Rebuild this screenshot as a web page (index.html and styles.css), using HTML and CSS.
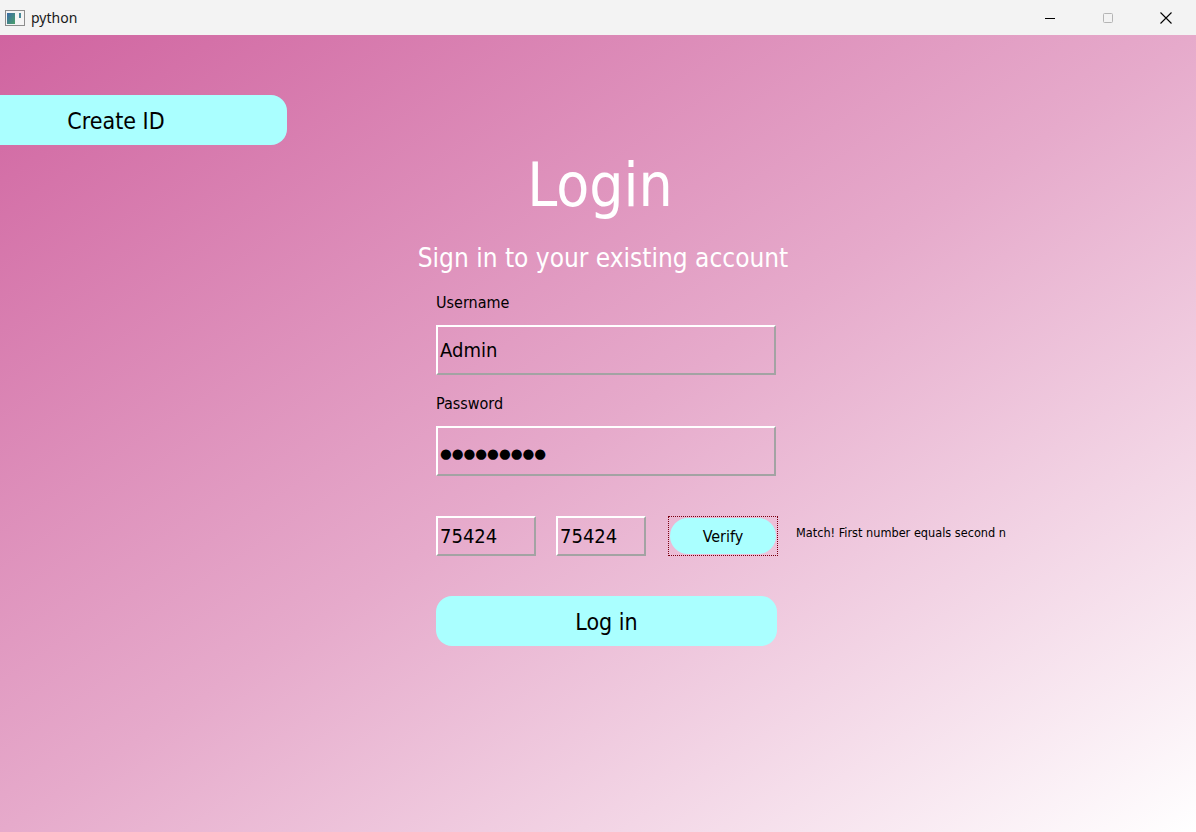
FILE: index.html
```html
<!DOCTYPE html>
<html>
<head>
<meta charset="utf-8">
<link rel="stylesheet" href="styles.css">
</head>
<body>
<div class="window">
  <div class="titlebar">
    <div class="app">
      <svg class="app-icon" width="20" height="16" viewBox="0 0 20 16">
        <rect x="0.5" y="0.5" width="19" height="15" fill="#f4f4f4" stroke="#8c8c8c"/>
        <defs><linearGradient id="g" x1="0" y1="0" x2="1" y2="1"><stop offset="0" stop-color="#3b6aa6"/><stop offset="1" stop-color="#4aa06a"/></linearGradient></defs>
        <rect x="2" y="3" width="8" height="11" fill="url(#g)"/>
        <rect x="14" y="3" width="2" height="5" fill="#4a8a9a"/>
      </svg>
      <span class="app-title">python</span>
    </div>
    <div class="controls">
      <svg class="ctl" width="12" height="12" viewBox="0 0 12 12"><line x1="1" y1="6.5" x2="11" y2="6.5" stroke="#000" stroke-width="1"/></svg>
      <svg class="ctl" width="12" height="12" viewBox="0 0 12 12"><rect x="1.5" y="1.5" width="9" height="9" rx="1" fill="none" stroke="#b5b5b5" stroke-width="1"/></svg>
      <svg class="ctl" width="12" height="12" viewBox="0 0 12 12"><path d="M0.5 0.5 L11.5 11.5 M11.5 0.5 L0.5 11.5" stroke="#000" stroke-width="1.1"/></svg>
    </div>
  </div>
  <div class="content">
    <div class="create-row">
      <button class="create-btn">Create ID</button>
    </div>
    <div class="form">
      <h1 class="title">Login</h1>
      <div class="subtitle">Sign in to your existing account</div>
      <div class="fields">
        <div class="label">Username</div>
        <div class="edit big">Admin</div>
        <div class="label second">Password</div>
        <div class="edit big dots">●●●●●●●●●</div>
        <div class="verify-row">
          <div class="edit small w100">75424</div>
          <div class="edit small w90">75424</div>
          <div class="verify-frame"><button class="verify-btn">Verify</button></div>
          <div class="match">Match! First number equals second n</div>
        </div>
        <button class="login-btn">Log in</button>
      </div>
    </div>
  </div>
</div>
</body>
</html>
```
FILE: styles.css
```css
* { box-sizing: border-box; }
html, body { margin: 0; padding: 0; }
body {
  width: 1196px;
  height: 832px;
  overflow: hidden;
  font-family: "DejaVu Sans Condensed", "DejaVu Sans", sans-serif;
}
.window {
  display: flex;
  flex-direction: column;
  width: 1196px;
  height: 832px;
}
.titlebar {
  height: 35px;
  flex: none;
  background: #f3f3f3;
  display: flex;
  align-items: center;
  justify-content: space-between;
}
.app {
  display: flex;
  align-items: center;
  padding-left: 5px;
}
.app-icon { display: block; margin-right: 6px; }
.app-title {
  font-family: "Noto Sans", "Open Sans", sans-serif;
  font-size: 14px;
  color: #1a1a1a;
}
.controls {
  display: flex;
  align-items: center;
  gap: 46px;
  padding-right: 24px;
}
.ctl { display: block; }
.content {
  flex: 1;
  background: linear-gradient(to bottom right, #d064a0 0%, #e6aacb 50%, #ffffff 100%);
  display: flex;
  flex-direction: column;
}
.create-row {
  padding-top: 60px;
  height: 110px;
}
.create-btn {
  margin-left: -55px;
  width: 342px;
  height: 50px;
  border: none;
  border-radius: 16px;
  background: #aaffff;
  font-family: inherit;
  font-size: 23px;
  color: #000;
  padding: 0;
  padding-top: 2px;
}
.form {
  display: flex;
  flex-direction: column;
  align-items: center;
}
.title {
  margin: 0;
  font-weight: normal;
  color: #fff;
  font-size: 60px;
  line-height: 80px;
  height: 80px;
  margin-left: 4px;
}
.subtitle {
  color: #fff;
  font-size: 26px;
  line-height: 34px;
  margin-top: 16px;
  margin-left: 10px;
}
.fields {
  margin-left: 18px;
  width: 342px;
  display: flex;
  flex-direction: column;
  margin-top: 18px;
}
.label {
  font-size: 16px;
  line-height: 20px;
  color: #000;
  height: 20px;
  margin-bottom: 12px;
}
.label.second { margin-top: 19px; }
.edit {
  flex: none;
  border-style: solid;
  border-width: 2px;
  border-color: #ffffff #a3a3a3 #a3a3a3 #ffffff;
  color: #000;
  display: flex;
  align-items: center;
  padding-left: 2px;
}
.edit.big {
  width: 340px;
  height: 50px;
  font-size: 20px;
}
.edit.dots {
  font-family: "DejaVu Sans", sans-serif;
  font-size: 13.5px;
  letter-spacing: 0;
  padding-top: 4px;
}
.edit.small {
  height: 40px;
  font-size: 20px;
  overflow: hidden;
}
.w100 { width: 100px; }
.w90 { width: 90px; margin-left: 20px; }
.verify-row {
  display: flex;
  align-items: center;
  margin-top: 40px;
  width: 700px;
}
.verify-frame {
  flex: none;
  margin-left: 22px;
  width: 110px;
  height: 40px;
  border: 1px dotted #7a0010;
  padding: 1px;
}
.verify-btn {
  display: block;
  width: 100%;
  height: 100%;
  border: none;
  border-radius: 18px;
  background: #aaffff;
  font-family: inherit;
  font-size: 16px;
  color: #000;
  padding: 0;
}
.match {
  flex: none;
  margin-left: 18px;
  font-size: 12.6px;
  white-space: nowrap;
  color: #000;
  margin-top: -7px;
}
.login-btn {
  margin-top: 40px;
  width: 341px;
  height: 50px;
  border: none;
  border-radius: 16px;
  background: #aaffff;
  font-family: inherit;
  font-size: 23px;
  color: #000;
  padding: 0;
  padding-top: 2px;
}
```
